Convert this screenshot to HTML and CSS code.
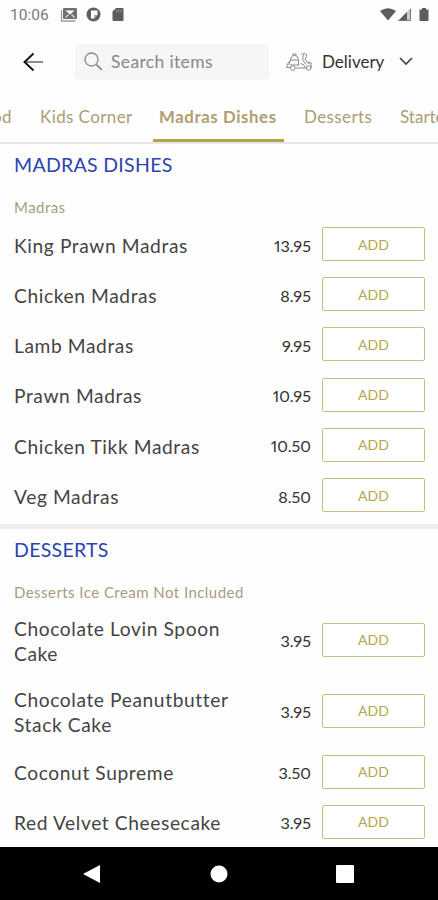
FILE: index.html
```html
<!DOCTYPE html>
<html lang="en">
<head>
    <meta charset="UTF-8">
    <meta name="viewport" content="width=device-width, initial-scale=1.0">
    <title>Menu</title>
    <link rel="stylesheet" href="styles.css">
</head>
<body>

    <div class="status-bar">
        <span class="clock">10:06</span>
        <svg class="status-left" width="64" height="16" viewBox="0 0 64 16">
            <path d="M1.500 3v11h14" fill="none" stroke="#999" stroke-width="1.300"/>
            <rect x="3" y="1" width="14" height="11" rx="1" fill="#707070"/>
            <path d="M5.500 3.500h9L10 7.500z" fill="#fff"/>
            <path d="M5.500 10.500l3-3M14.500 10.500l-3-3" stroke="#ddd" stroke-width="1.200"/>
            <circle cx="33.500" cy="7.500" r="7" fill="#606060"/>
            <path d="M31 3.500h6.500v4.500h-3v3.500H31z" fill="#fff"/>
            <path d="M34.500 8h3l-3 3.500z" fill="#aaa"/>
            <path d="M56 1h6.500a1 1 0 0 1 1 1v11a1 1 0 0 1-1 1h-9a1 1 0 0 1-1-1V4.500z" fill="#5c5c5c"/>
            <path d="M56.500 2.500v3M58.700 2.500v3M60.900 2.500v3" stroke="#999" stroke-width=".8"/>
        </svg>
        <svg class="status-right" width="50" height="16" viewBox="0 0 50 16">
            <path d="M0 4Q8-1.500 16 4L8 13.500z" fill="#5c5c5c"/>
            <path d="M31 .5V14H18z" fill="#ccc"/>
            <path d="M27 5v9h-9z" fill="#5c5c5c"/>
            <path d="M30.500 2v11.500H19" fill="none" stroke="#777"/>
            <path d="M42 1h4v1.500h2.500V14h-9V2.500H42z" fill="#5c5c5c"/>
        </svg>
    </div>

    <div class="header">
        <svg class="back" width="20" height="20" viewBox="0 0 20 20">
            <path d="M2 10h18" stroke="#777" stroke-width="1.700"/>
            <path d="M10.500 1.500L1.500 10l9 8.500" fill="none" stroke="#111" stroke-width="1.900"/>
        </svg>
        <div class="search">
            <svg width="19" height="19" viewBox="0 0 19 19" fill="none" stroke="#888" stroke-width="1.300">
                <circle cx="7.500" cy="7.500" r="6.500"/>
                <path d="M12.300 12.300l5.500 5.500" stroke-width="1.700"/>
            </svg>
            <span>Search items</span>
        </div>
        <div class="mode">
            <svg width="27" height="20" viewBox="0 0 27 20" fill="none" stroke="#888" stroke-width="1">
                <path d="M4.500 8Q5 3.500 8.500 3.500T12.500 8zM7 3.500V2h3v1.500"/>
                <path d="M4.500 8L2.500 13M12.500 8v5.500M4 13h9M4 9Q1 11 .5 15.500h3.500M9.500 16h10q-1-4-5-4.500"/>
                <circle cx="6.800" cy="16" r="2.300"/>
                <circle cx="22.700" cy="16" r="2.300"/>
                <path d="M15.500 2.500q3.500-2.500 5 0 .5 2-1.500 4.500l3 4q3.500 0 3.500 4.500M18 2.500q-2 3-1 6l3 4M22 11q3-2 3.500 1"/>
            </svg>
            <span>Delivery</span>
            <svg class="chevron" width="14" height="9" viewBox="0 0 14 9">
                <path d="M1 1l6 6 6-6" fill="none" stroke="#444" stroke-width="1.700"/>
            </svg>
        </div>
    </div>

    <div class="tabs">
        <span class="tab food">Food</span>
        <span class="tab kids">Kids Corner</span>
        <span class="tab active">Madras Dishes</span>
        <span class="tab sweets">Desserts</span>
        <span class="tab starters">Starters</span>
    </div>

    <div class="menu">
        <div class="section">
            <h2>MADRAS DISHES</h2>
            <p class="note">Madras</p>
            <div class="item"><span class="name">King Prawn Madras</span><span class="price">13.95</span><button class="add">ADD</button></div>
            <div class="item"><span class="name">Chicken Madras</span><span class="price">8.95</span><button class="add">ADD</button></div>
            <div class="item"><span class="name">Lamb Madras</span><span class="price">9.95</span><button class="add">ADD</button></div>
            <div class="item"><span class="name">Prawn Madras</span><span class="price">10.95</span><button class="add">ADD</button></div>
            <div class="item"><span class="name">Chicken Tikk Madras</span><span class="price">10.50</span><button class="add">ADD</button></div>
            <div class="item"><span class="name">Veg Madras</span><span class="price">8.50</span><button class="add">ADD</button></div>
        </div>

        <div class="section">
            <h2>DESSERTS</h2>
            <p class="note">Desserts Ice Cream Not Included</p>
            <div class="item"><span class="name">Chocolate Lovin Spoon<br>Cake</span><span class="price">3.95</span><button class="add">ADD</button></div>
            <div class="item"><span class="name">Chocolate Peanutbutter<br>Stack Cake</span><span class="price">3.95</span><button class="add">ADD</button></div>
            <div class="item"><span class="name">Coconut Supreme</span><span class="price">3.50</span><button class="add">ADD</button></div>
            <div class="item"><span class="name">Red Velvet Cheesecake</span><span class="price">3.95</span><button class="add">ADD</button></div>
        </div>
    </div>

    <div class="nav-bar">
        <svg width="18" height="18" viewBox="0 0 18 18"><path d="M17 0v18L0 9z" fill="#fff"/></svg>
        <svg width="18" height="18" viewBox="0 0 18 18"><circle cx="9" cy="9" r="8.500" fill="#fff"/></svg>
        <svg width="18" height="18" viewBox="0 0 18 18"><rect width="18" height="18" rx="1" fill="#fff"/></svg>
    </div>

</body>
</html>
```

FILE: styles.css
```css
* {
    box-sizing: border-box;
}

body {
    font-family: Lato, 'Open Sans', sans-serif;
    margin: 0;
    height: 900px;
    display: flex;
    flex-direction: column;
    overflow: hidden;
    background-color: #fefefe;
    color: #444;
}

svg {
    display: block;
    flex: none;
}

.status-bar {
    height: 29px;
    display: flex;
    align-items: center;
    padding: 0 8px 0 10px;
}

.clock {
    width: 50px;
    font-family: Roboto, sans-serif;
    font-size: 15.5px;
    color: #7a7a7a;
}

.status-right {
    margin-left: auto;
}

.header {
    height: 65px;
    display: flex;
    align-items: center;
    padding: 0 25px 0 23px;
}

.search {
    width: 194px;
    height: 36px;
    margin-left: 32px;
    padding-left: 9px;
    display: flex;
    align-items: center;
    gap: 8px;
    border-radius: 4px;
    background-color: #f6f6f6;
    font-size: 17.5px;
    letter-spacing: 0.35px;
    color: #888;
}

.mode {
    flex: 1;
    display: flex;
    align-items: center;
    margin-left: 17px;
    font-size: 17px;
    color: #333;
}

.mode span {
    margin-left: 9px;
}

.chevron {
    margin-left: auto;
}

.tabs {
    height: 50px;
    flex: none;
    display: flex;
    overflow: hidden;
    border-bottom: 2px solid #e6e6e6;
    font-size: 17px;
    line-height: 46px;
    letter-spacing: 0.4px;
    color: #ab9c76;
    white-space: nowrap;
}

.tab {
    height: 48px;
    flex: none;
    padding: 0 10px;
}

/* the tab strip is scrolled, so the first tab is mostly off the left edge */
.food {
    width: 73px;
    margin-left: -43px;
    text-align: right;
    padding-right: 18px;
}

.kids {
    width: 123px;
}

.active {
    width: 131px;
    padding: 0 6px;
    font-size: 16.8px;
    font-weight: bold;
    letter-spacing: 0.6px;
    color: #ae9e70;
    border-bottom: 3px solid #b3a449;
}

.sweets {
    width: 106px;
    padding-left: 20px;
}

.starters {
    letter-spacing: 0;
}

.menu {
    flex: 1;
    min-height: 0;
    overflow: hidden;
}

.section {
    padding: 0 13px 0 14px;
}

.section + .section {
    margin-top: 3px;
    border-top: 5px solid #eee;
}

h2 {
    margin: 0;
    padding-top: 8px;
    font-size: 19.5px;
    line-height: 26px;
    font-weight: normal;
    letter-spacing: 0.3px;
    color: #2b43b0;
}

.note {
    margin: 0;
    padding: 18px 0 2px;
    font-size: 15px;
    line-height: 22px;
    letter-spacing: 0.45px;
    color: #a99b80;
}

.item {
    min-height: 50.2px;
    padding: 10px 0;
    display: flex;
    align-items: center;
}

.name {
    flex: 1;
    padding-top: 2px;
    font-size: 19.2px;
    line-height: 24.6px;
    letter-spacing: 0.6px;
    white-space: nowrap;
}

.price {
    margin-right: 11px;
    font-size: 16.2px;
    font-variant-numeric: proportional-nums;
    color: #333;
}

.add {
    width: 103px;
    height: 34px;
    margin: -7px 0 -5px;
    padding: 0;
    font-family: inherit;
    font-size: 14px;
    color: #b5a64f;
    background-color: #fff;
    border: 1px solid #c9bd80;
    border-radius: 2px;
}

.nav-bar {
    height: 53px;
    flex: none;
    display: flex;
    justify-content: space-between;
    align-items: center;
    padding: 0 84px 0 83px;
    background-color: #000;
}
```
